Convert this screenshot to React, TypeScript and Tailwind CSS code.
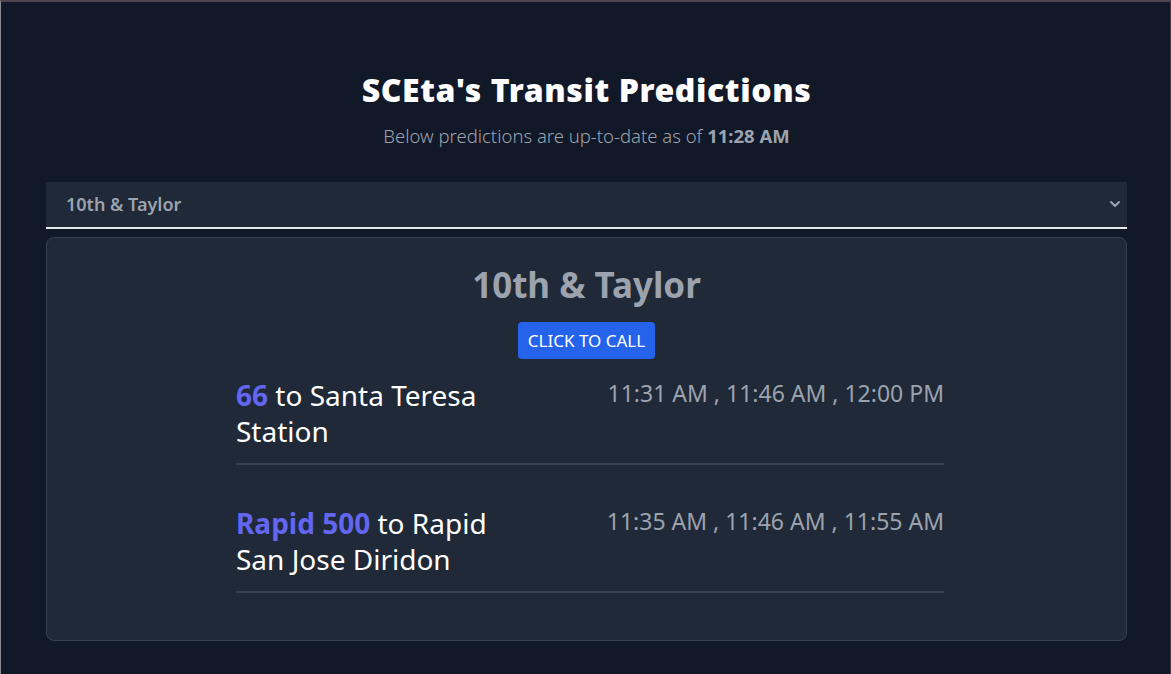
import { ChevronDown } from "lucide-react";

interface Prediction {
  route: string;
  destination: string;
  times: string[];
}

const predictions: Prediction[] = [
  {
    route: "66",
    destination: "Santa Teresa Station",
    times: ["11:31 AM", "11:46 AM", "12:00 PM"],
  },
  {
    route: "Rapid 500",
    destination: "Rapid San Jose Diridon",
    times: ["11:35 AM", "11:46 AM", "11:55 AM"],
  },
];

export default function App() {
  return (
    <div
      className="min-h-[674px] bg-[#111827] border-t-2 border-t-[#52414f] border-l border-l-[#8b8b8b] border-r border-r-[#3a3a48] text-white"
      style={{ fontFamily: '"Noto Sans", "Open Sans", sans-serif' }}
    >
      <div className="pl-[45px] pr-[43px] pt-[68px] pb-8">
        {/* Header */}
        <div className="text-center">
          <h1 className="text-[32px] leading-10 font-black tracking-[0.6px]">
            SCEta's Transit Predictions
          </h1>
          <p className="mt-[12px] text-[18.5px] font-light text-[#9ca3af]">
            Below predictions are up-to-date as of{" "}
            <span className="font-bold">11:28 AM</span>
          </p>
        </div>

        {/* Stop selector */}
        <div className="mt-[32px] flex items-center justify-between h-[47px] bg-[#1f2937] border-b-2 border-[#e5e7eb] pl-5 pr-1">
          <span className="text-lg font-semibold text-[#9ca3af]">10th &amp; Taylor</span>
          <ChevronDown className="w-4 h-4 text-[#9ca3af]" strokeWidth={3} />
        </div>

        {/* Predictions card */}
        <div className="mt-2 h-[404px] rounded-lg border border-[#374151] bg-[#1f2937] pt-[24px]">
          <h2 className="text-center text-[35px] leading-[46px] font-bold text-[#9ca3af]">
            10th &amp; Taylor
          </h2>
          <div className="mt-[14px] flex justify-center">
            <button className="h-[37px] rounded bg-[#2563eb] px-[10px] text-[17px] text-white">
              CLICK TO CALL
            </button>
          </div>

          <div className="ml-[189px] mt-[18px] w-[708px] flex flex-col gap-[40px]">
            {predictions.map((p) => (
              <div
                key={p.route}
                className="flex justify-between border-b-2 border-[#374151] pb-[14px]"
              >
                <div className="w-[290px] text-[28px] leading-[36px]">
                  <span className="font-bold text-[#6366f1]">{p.route}</span> to{" "}
                  {p.destination}
                </div>
                <div className="text-[23px] leading-[30px] text-[#9ca3af] pt-[1px]">
                  {p.times.join(" , ")}
                </div>
              </div>
            ))}
          </div>
        </div>
      </div>
    </div>
  );
}
